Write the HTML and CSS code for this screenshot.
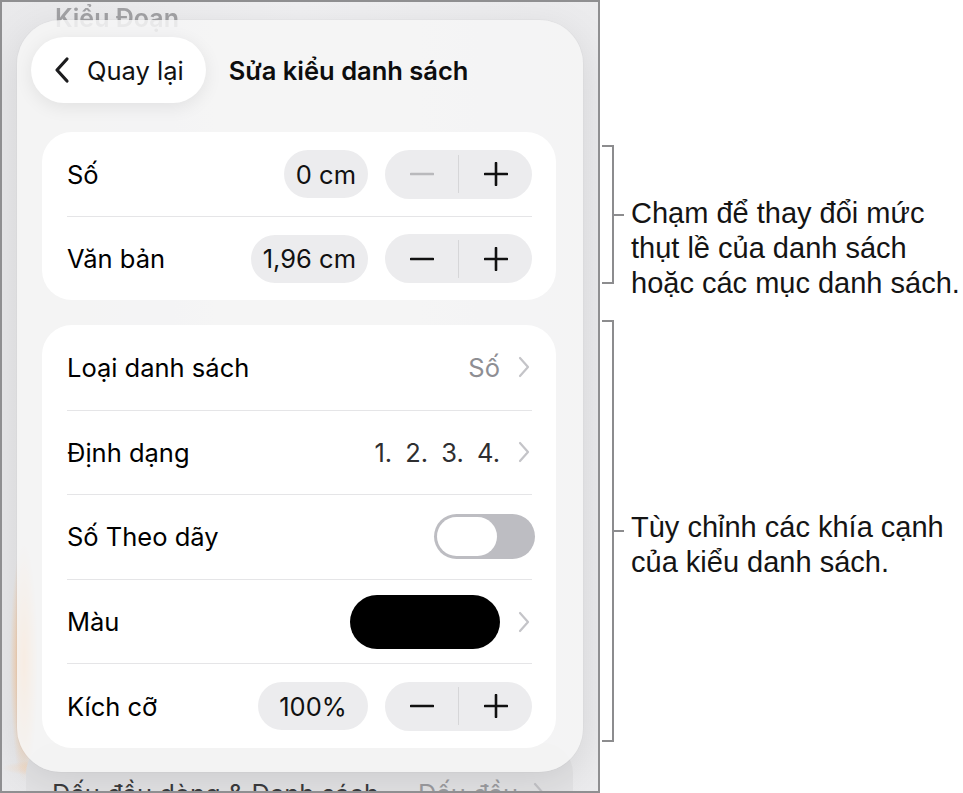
FILE: index.html
```html
<!DOCTYPE html>
<html lang="vi">
<head>
<meta charset="utf-8">
<title>Sửa kiểu danh sách</title>
<link rel="stylesheet" href="styles.css">
</head>
<body>
<div class="page">
  <div class="device">
    <div class="under-top">Kiểu Đoạn</div>
    <div class="under-bottom">
      <span>Dấu đầu dòng &amp; Danh sách</span>
      <span class="under-val">Dấu đầu
        <svg class="chev" viewBox="0 0 14 24" width="14" height="24"><path d="M3 3 L11 12 L3 21"/></svg>
      </span>
    </div>

    <section class="popover">
      <header class="pop-head">
        <button class="back" type="button">
          <svg class="back-chev" viewBox="0 0 16 28" width="16" height="28"><path d="M13 3 L3 14 L13 25"/></svg>
          <span>Quay lại</span>
        </button>
        <h1 class="title">Sửa kiểu danh sách</h1>
      </header>

      <div class="card">
        <div class="row">
          <span class="label">Số</span>
          <div class="ctrl">
            <span class="pill">0 cm</span>
            <div class="stepper">
              <span class="step"><svg class="sym is-off" viewBox="0 0 24 24" width="24" height="24"><path d="M1 12 H23"/></svg></span>
              <span class="sep"></span>
              <span class="step"><svg class="sym" viewBox="0 0 24 24" width="24" height="24"><path d="M1 12 H23 M12 1 V23"/></svg></span>
            </div>
          </div>
        </div>
        <div class="row">
          <span class="label">Văn bản</span>
          <div class="ctrl">
            <span class="pill">1,96 cm</span>
            <div class="stepper">
              <span class="step"><svg class="sym" viewBox="0 0 24 24" width="24" height="24"><path d="M1 12 H23"/></svg></span>
              <span class="sep"></span>
              <span class="step"><svg class="sym" viewBox="0 0 24 24" width="24" height="24"><path d="M1 12 H23 M12 1 V23"/></svg></span>
            </div>
          </div>
        </div>
      </div>

      <div class="card card-list">
        <div class="row">
          <span class="label">Loại danh sách</span>
          <div class="ctrl">
            <span class="value is-muted">Số</span>
            <svg class="chev" viewBox="0 0 14 24" width="14" height="24"><path d="M3 3 L11 12 L3 21"/></svg>
          </div>
        </div>
        <div class="row">
          <span class="label">Định dạng</span>
          <div class="ctrl">
            <span class="value value-seq">1. 2. 3. 4.</span>
            <svg class="chev" viewBox="0 0 14 24" width="14" height="24"><path d="M3 3 L11 12 L3 21"/></svg>
          </div>
        </div>
        <div class="row">
          <span class="label">Số Theo dãy</span>
          <div class="ctrl">
            <span class="toggle"><span class="knob"></span></span>
          </div>
        </div>
        <div class="row">
          <span class="label">Màu</span>
          <div class="ctrl">
            <span class="swatch"></span>
            <svg class="chev" viewBox="0 0 14 24" width="14" height="24"><path d="M3 3 L11 12 L3 21"/></svg>
          </div>
        </div>
        <div class="row">
          <span class="label">Kích cỡ</span>
          <div class="ctrl">
            <span class="pill pill-pct">100%</span>
            <div class="stepper">
              <span class="step"><svg class="sym" viewBox="0 0 24 24" width="24" height="24"><path d="M1 12 H23"/></svg></span>
              <span class="sep"></span>
              <span class="step"><svg class="sym" viewBox="0 0 24 24" width="24" height="24"><path d="M1 12 H23 M12 1 V23"/></svg></span>
            </div>
          </div>
        </div>
      </div>
    </section>
  </div>

  <aside class="notes">
    <div class="note note-indent">
      <span class="bracket"></span>
      <p class="note-text">Chạm để thay đổi mức<br>thụt lề của danh sách<br>hoặc các mục danh sách.</p>
    </div>
    <div class="note note-style">
      <span class="bracket"></span>
      <p class="note-text">Tùy chỉnh các khía cạnh<br>của kiểu danh sách.</p>
    </div>
  </aside>
</div>
</body>
</html>
```

FILE: styles.css
```css
* { box-sizing: border-box; }

html, body {
  margin: 0;
  padding: 0;
  background: #ffffff;
}

body {
  font-family: Inter, "Noto Sans", sans-serif;
  color: #000;
  width: 963px;
  height: 793px;
  overflow: hidden;
}

.page {
  display: flex;
  align-items: flex-start;
}

/* ---------- tablet frame ---------- */
.device {
  position: relative;
  flex: none;
  width: 600px;
  height: 793px;
  border: 2px solid #8f8f91;
  overflow: hidden;
  display: flex;
  flex-direction: column;
  background-color: #ededef;
  background-image:
    radial-gradient(ellipse 14px 120px at 22px 660px, rgba(255, 190, 130, 1), rgba(255, 200, 150, 0) 100%),
    radial-gradient(ellipse 80px 10px at 80px 766px, rgba(255, 200, 150, 0.9), rgba(255, 205, 160, 0) 100%),
    linear-gradient(90deg, #e9e9eb 0%, #f0f0f2 50%, #ebebed 100%);
}

.under-top {
  padding: 1px 0 0 53px;
  font-size: 25px;
  font-weight: 600;
  color: #a2a2a5;
  filter: blur(0.6px);
}

.under-bottom {
  margin: auto 25px -52px 24px;
  height: 100px;
  padding: 0 26px 0 26px;
  border-radius: 30px;
  background: #e3e3e5;
  display: flex;
  align-items: center;
  justify-content: space-between;
  font-size: 25.5px;
  color: #3b3b3d;
}

.under-val {
  display: flex;
  align-items: center;
  gap: 14px;
  color: #9c9ca0;
}

/* ---------- popover ---------- */
.popover {
  position: absolute;
  left: 15px;
  top: 18px;
  width: 566px;
  height: 752px;
  padding: 17px 27px 24px 25px;
  border-radius: 44px;
  background: rgba(245, 245, 246, 0.84);
  box-shadow: 0 10px 40px rgba(0, 0, 0, 0.10), 0 0 0 1px rgba(0, 0, 0, 0.02);
  display: flex;
  flex-direction: column;
}

.pop-head {
  display: flex;
  align-items: center;
  gap: 23px;
  height: 66px;
  margin: 0 0 29px -11px;
}

.back {
  display: flex;
  align-items: center;
  gap: 17px;
  height: 66px;
  padding: 0 22px 0 23px;
  border: none;
  border-radius: 33px;
  background: #ffffff;
  box-shadow: 0 4px 18px rgba(0, 0, 0, 0.08);
  font: inherit;
  font-size: 25.5px;
  color: #111;
}

.back-chev path {
  fill: none;
  stroke: #1c1c1e;
  stroke-width: 3.2;
  stroke-linecap: round;
  stroke-linejoin: round;
}

.title {
  margin: 0;
  font-size: 25.5px;
  font-weight: 600;
  color: #0d0d0d;
}

/* ---------- grouped cards ---------- */
.card {
  background: #ffffff;
  border-radius: 30px;
}

.card + .card { margin-top: 25px; }

.row {
  height: 84px;
  margin: 0 24px 0 25px;
  display: flex;
  align-items: center;
  justify-content: space-between;
  border-top: 1px solid #e5e5e7;
}

.row:first-child { border-top: none; }

.card-list .row { height: 84.6px; }

.label {
  font-size: 25.5px;
  color: #000;
}

.ctrl {
  display: flex;
  align-items: center;
  gap: 17px;
}

.pill {
  height: 48px;
  padding: 0 12px;
  border-radius: 24px;
  background: #ececee;
  display: flex;
  align-items: center;
  justify-content: center;
  font-size: 25.5px;
  color: #111;
}

.pill-pct { width: 110px; }

.stepper {
  width: 147px;
  height: 49px;
  border-radius: 25px;
  background: #ececee;
  display: flex;
  align-items: center;
}

.step {
  flex: 1;
  display: flex;
  justify-content: center;
  align-items: center;
}

.sep {
  width: 1px;
  height: 38px;
  background: #d6d6d8;
}

.sym path {
  fill: none;
  stroke: #111;
  stroke-width: 2.6;
  stroke-linecap: round;
}

.sym.is-off path { stroke: #b9b9bc; }

.value {
  font-size: 25.5px;
  color: #2e2e30;
}

.value-seq { word-spacing: 6px; }

.value.is-muted { color: #8e8e93; }

.chev {
  margin-right: 1px;
}

.chev path {
  fill: none;
  stroke: #c4c4c8;
  stroke-width: 2.2;
  stroke-linecap: round;
  stroke-linejoin: round;
}

.toggle {
  width: 101px;
  height: 45px;
  margin-right: -3px;
  padding: 3px;
  border-radius: 23px;
  background: #bdbdc2;
  display: flex;
}

.knob {
  width: 60px;
  height: 39px;
  border-radius: 20px;
  background: #ffffff;
}

.swatch {
  width: 150px;
  height: 54px;
  border-radius: 27px;
  background: #000000;
}

/* ---------- callouts ---------- */
.notes {
  flex: 1;
  padding: 145px 0 0 2px;
  display: flex;
  flex-direction: column;
  gap: 36px;
  font-family: "Liberation Sans", Arial, sans-serif;
  color: #141414;
}

.note {
  display: flex;
  align-items: flex-start;
}

.note-indent { height: 139px; }
.note-style { height: 422px; }

.bracket {
  position: relative;
  flex: none;
  width: 12px;
  height: 100%;
  border: 2px solid #8c8c8e;
  border-left: none;
}

.bracket::after {
  content: "";
  position: absolute;
  left: 100%;
  top: calc(50% - 1px);
  width: 12px;
  height: 2px;
  background: #8c8c8e;
}

.note-text {
  margin: 0 0 0 17px;
  font-size: 29px;
  line-height: 35px;
  white-space: nowrap;
}

.note-indent .note-text { padding-top: 51px; }
.note-style .note-text { padding-top: 190px; }
```
